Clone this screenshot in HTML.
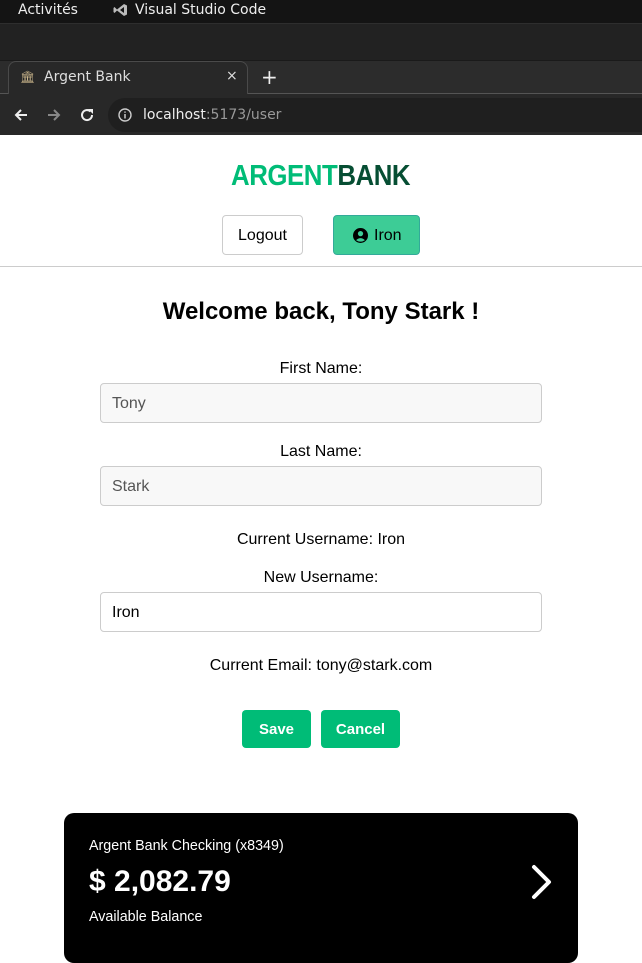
<!DOCTYPE html>
<html><head><meta charset="utf-8"><style>
*{box-sizing:border-box;margin:0;padding:0}
body{width:642px;height:948px;overflow:hidden;background:#fff;font-family:"Liberation Sans",Arial,sans-serif;position:relative}
.abs{position:absolute}
.ub{font-family:"DejaVu Sans","Liberation Sans",sans-serif}
label{display:block;text-align:center;font-size:16px;color:#000}
.inp{position:absolute;left:100px;width:442px;height:40px;border:1px solid #ccc;border-radius:4px;background:#f8f8f8;color:#555;font-size:16px;padding:11px 11px 9px}
.btn{position:absolute;background:#00bc77;color:#fff;font-weight:bold;font-size:15px;border-radius:4px;text-align:center;line-height:40px;height:38px;top:710px}
</style></head><body>
<div class="abs" style="left:0;top:0;width:642px;height:23px;background:#141414"></div>
<div class="abs ub" style="left:18px;top:2px;color:#eee;font-size:14px">Activités</div>
<svg class="abs" style="left:113px;top:3px" width="15" height="14" viewBox="0 0 15 14"><path d="M11 1 L14 2.5 V11.5 L11 13 L4 7.5 L1.5 10 L0.5 9 V5 L1.5 4 L4 6.5 Z M11 4 L7 7 L11 10 Z" fill="#bbb"/></svg>
<div class="abs ub" style="left:135px;top:2px;color:#eee;font-size:14px">Visual Studio Code</div>
<div class="abs" style="left:0;top:23px;width:642px;height:37px;background:#222;border-top:1px solid #2e2e2e"></div>
<div class="abs" style="left:0;top:60px;width:642px;height:34px;background:#2c2c2c;border-top:1px solid #1a1a1a;border-bottom:1px solid #555"></div>
<div class="abs" style="left:8px;top:61px;width:240px;height:33px;background:#282828;border:1px solid #4a4a4a;border-bottom:none;border-radius:8px 8px 0 0"></div>
<div class="abs" style="left:20px;top:70px;width:14px;height:13px;font-size:12px;color:#c9b48a">🏛</div>
<div class="abs ub" style="left:44px;top:69px;color:#ddd;font-size:14px">Argent Bank</div>
<div class="abs ub" style="left:226px;top:68px;color:#ddd;font-size:14px">×</div>
<div class="abs ub" style="left:261px;top:65px;color:#eee;font-size:20px">+</div>
<div class="abs" style="left:0;top:94px;width:642px;height:41px;background:#282828"></div>
<div class="abs" style="left:108px;top:98px;width:534px;height:34px;background:#1f1f1f;border-radius:17px 0 0 17px"></div>
<svg class="abs" style="left:12px;top:106px" width="18" height="18" viewBox="0 0 18 18"><path d="M15 9H4M9 4L4 9L9 14" stroke="#eee" stroke-width="2" fill="none"/></svg>
<svg class="abs" style="left:45px;top:106px" width="18" height="18" viewBox="0 0 18 18"><path d="M3 9H14M9 4L14 9L9 14" stroke="#888" stroke-width="2" fill="none"/></svg>
<svg class="abs" style="left:78px;top:106px" width="18" height="18" viewBox="0 0 18 18"><path d="M14 9A5 5 0 1 1 12.5 5.5" stroke="#eee" stroke-width="2" fill="none"/><path d="M10 3H15V8Z" fill="#eee"/></svg>
<svg class="abs" style="left:118px;top:108px" width="14" height="14" viewBox="0 0 14 14"><circle cx="7" cy="7" r="6" stroke="#ccc" stroke-width="1.4" fill="none"/><path d="M7 6V10.5M7 3.5V4.8" stroke="#ccc" stroke-width="1.5"/></svg>
<div class="abs ub" style="left:143px;top:107px;font-size:14px;color:#eee">localhost<span style="color:#999">:5173/user</span></div>

<div class="abs" style="left:231px;top:160px;font-size:29px;font-weight:bold;letter-spacing:-0.5px;transform:scaleX(0.89);transform-origin:left"><span style="color:#00bc77">ARGENT</span><span style="color:#064e33">BANK</span></div>
<div class="abs" style="left:222px;top:215px;width:81px;height:40px;border:1px solid #ccc;border-radius:4px;text-align:center;line-height:40px;font-size:16px">Logout</div>
<div class="abs" style="left:333px;top:215px;width:87px;height:40px;border:1px solid #3a9;border-radius:4px;background:#3dcc96;font-size:16px;line-height:40px;padding-left:19px"><svg style="vertical-align:-3px;margin-right:6px" width="15" height="15" viewBox="0 0 16 16"><circle cx="8" cy="8" r="8" fill="#000"/><circle cx="8" cy="6" r="2.8" fill="#3dcc96"/><path d="M3.3 13 Q8 8.5 12.7 13 Q8 16 3.3 13Z" fill="#3dcc96"/></svg>Iron</div>
<div class="abs" style="left:0;top:266px;width:642px;height:1px;background:#ccc"></div>

<div class="abs" style="left:0;top:298px;width:642px;text-align:center;font-size:24px;font-weight:bold">Welcome back, Tony Stark !</div>
<div class="abs" style="left:0;top:360px;width:642px"><label>First Name:</label></div>
<div class="inp" style="top:383px">Tony</div>
<div class="abs" style="left:0;top:443px;width:642px"><label>Last Name:</label></div>
<div class="inp" style="top:466px">Stark</div>
<div class="abs" style="left:0;top:531px;width:642px"><label>Current Username: Iron</label></div>
<div class="abs" style="left:0;top:569px;width:642px"><label>New Username:</label></div>
<div class="inp" style="top:592px;background:#fff;color:#000">Iron</div>
<div class="abs" style="left:0;top:657px;width:642px"><label>Current Email: tony@stark.com</label></div>
<div class="btn" style="left:242px;width:69px">Save</div>
<div class="btn" style="left:321px;width:79px">Cancel</div>

<div class="abs" style="left:64px;top:813px;width:514px;height:150px;background:#000;border-radius:10px"></div>
<div class="abs" style="left:89px;top:838px;color:#fff;font-size:14.3px">Argent Bank Checking (x8349)</div>
<div class="abs" style="left:89px;top:865px;color:#fff;font-size:30px;font-weight:bold">$ 2,082.79</div>
<div class="abs" style="left:89px;top:909px;color:#fff;font-size:14.3px">Available Balance</div>
<svg class="abs" style="left:528px;top:863px" width="28" height="38" viewBox="0 0 28 38"><path d="M6 4L21 19L6 34" stroke="#fff" stroke-width="4" fill="none" stroke-linecap="round" stroke-linejoin="round"/></svg>
</body></html>
